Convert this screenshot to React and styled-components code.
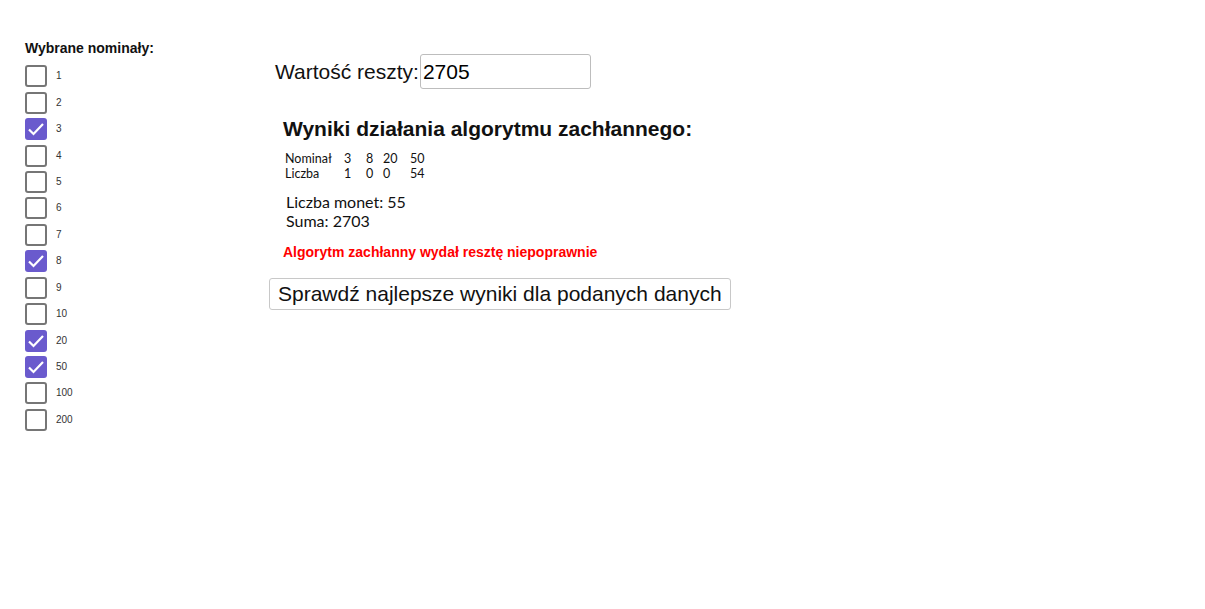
import React from "react";
import styled, { createGlobalStyle } from "styled-components";

const Global = createGlobalStyle`
  html, body { margin: 0; padding: 0; background: #fff; }
  body { font-family: "Liberation Sans", Arial, sans-serif; color: #000; }
`;

const Page = styled.div`
  display: flex;
  align-items: flex-start;
  width: 1205px;
  height: 609px;
`;

const Sidebar = styled.aside`
  width: 269px;
  padding: 40px 0 0 25px;
  box-sizing: border-box;
  flex: none;
`;

const SideTitle = styled.div`
  font-size: 14px;
  font-weight: bold;
  line-height: 16px;
  margin-bottom: 7px;
  color: #111;
`;

const List = styled.div`
  display: flex;
  flex-direction: column;
`;

const Row = styled.label`
  display: flex;
  align-items: center;
  height: 26.45px;
  gap: 9px;
`;

const Box = styled.span`
  width: 22px;
  height: 22px;
  box-sizing: border-box;
  border-radius: 3px;
  border: ${(p) => (p.$checked ? "none" : "2px solid #767676")};
  background: ${(p) => (p.$checked ? "#6a5acd" : "#fff")};
  display: flex;
  align-items: center;
  justify-content: center;
  flex: none;
`;

const Num = styled.span`
  font-size: 10px;
  color: #333;
  line-height: 12px;
`;

const Main = styled.main`
  display: flex;
  flex-direction: column;
  align-items: flex-start;
  padding-top: 54px;
`;

const InputRow = styled.div`
  display: flex;
  align-items: center;
  margin-left: 6px;
`;

const InputLabel = styled.span`
  font-size: 21px;
  color: #111;
  margin-right: 1px;
`;

const ValueInput = styled.div`
  width: 171px;
  height: 35px;
  box-sizing: border-box;
  border: 1px solid #bdbdbd;
  border-radius: 3px;
  font-size: 21px;
  padding: 0 2px;
  display: flex;
  align-items: center;
  color: #000;
`;

const Results = styled.section`
  margin: 27px 0 0 14px;
  display: flex;
  flex-direction: column;
  align-items: flex-start;
`;

const Heading = styled.h2`
  margin: 0;
  font-size: 21px;
  font-weight: bold;
  line-height: 25px;
  color: #111;
`;

const Table = styled.table`
  margin: 10px 0 0 2px;
  border-collapse: collapse;
  font-family: "Lato", "DejaVu Sans", sans-serif;
  font-size: 12.5px;
  color: #111;
  td { padding: 0; line-height: 15px; }
`;

const Cell = styled.td`
  width: ${(p) => p.$w}px;
`;

const Summary = styled.div`
  margin: 11px 0 0 3px;
  font-family: "Lato", "DejaVu Sans", sans-serif;
  font-size: 16px;
  line-height: 19px;
  color: #111;
`;

const Warning = styled.div`
  margin-top: 14px;
  font-size: 14px;
  font-weight: bold;
  color: #ff0000;
`;

const CheckButton = styled.button`
  margin: 18px 0 0 0;
  font-family: "Liberation Sans", Arial, sans-serif;
  font-size: 21px;
  height: 32px;
  padding: 0 8px;
  background: #fff;
  color: #111;
  border: 1px solid #c8c8c8;
  border-radius: 3px;
`;

const Check = () => (
  <svg width="18" height="14" viewBox="0 0 18 14">
    <path d="M2 7.5 L6.5 12 L16 2" fill="none" stroke="#fff" strokeWidth="2.2" />
  </svg>
);

const noms = [1, 2, 3, 4, 5, 6, 7, 8, 9, 10, 20, 50, 100, 200];
const checked = new Set([3, 8, 20, 50]);
const widths = [59, 22, 17, 27, 20];

export default function App() {
  return (
    <>
      <Global />
      <Page>
        <Sidebar>
          <SideTitle>Wybrane nominały:</SideTitle>
          <List>
            {noms.map((n) => (
              <Row key={n}>
                <Box $checked={checked.has(n)}>{checked.has(n) && <Check />}</Box>
                <Num>{n}</Num>
              </Row>
            ))}
          </List>
        </Sidebar>
        <Main>
          <InputRow>
            <InputLabel>Wartość reszty:</InputLabel>
            <ValueInput>2705</ValueInput>
          </InputRow>
          <Results>
            <Heading>Wyniki działania algorytmu zachłannego:</Heading>
            <Table>
              <tbody>
                <tr>
                  {["Nominał", "3", "8", "20", "50"].map((t, i) => (
                    <Cell key={i} $w={widths[i]}>{t}</Cell>
                  ))}
                </tr>
                <tr>
                  {["Liczba", "1", "0", "0", "54"].map((t, i) => (
                    <Cell key={i} $w={widths[i]}>{t}</Cell>
                  ))}
                </tr>
              </tbody>
            </Table>
            <Summary>
              Liczba monet: 55
              <br />
              Suma: 2703
            </Summary>
            <Warning>Algorytm zachłanny wydał resztę niepoprawnie</Warning>
          </Results>
          <CheckButton>Sprawdź najlepsze wyniki dla podanych danych</CheckButton>
        </Main>
      </Page>
    </>
  );
}
